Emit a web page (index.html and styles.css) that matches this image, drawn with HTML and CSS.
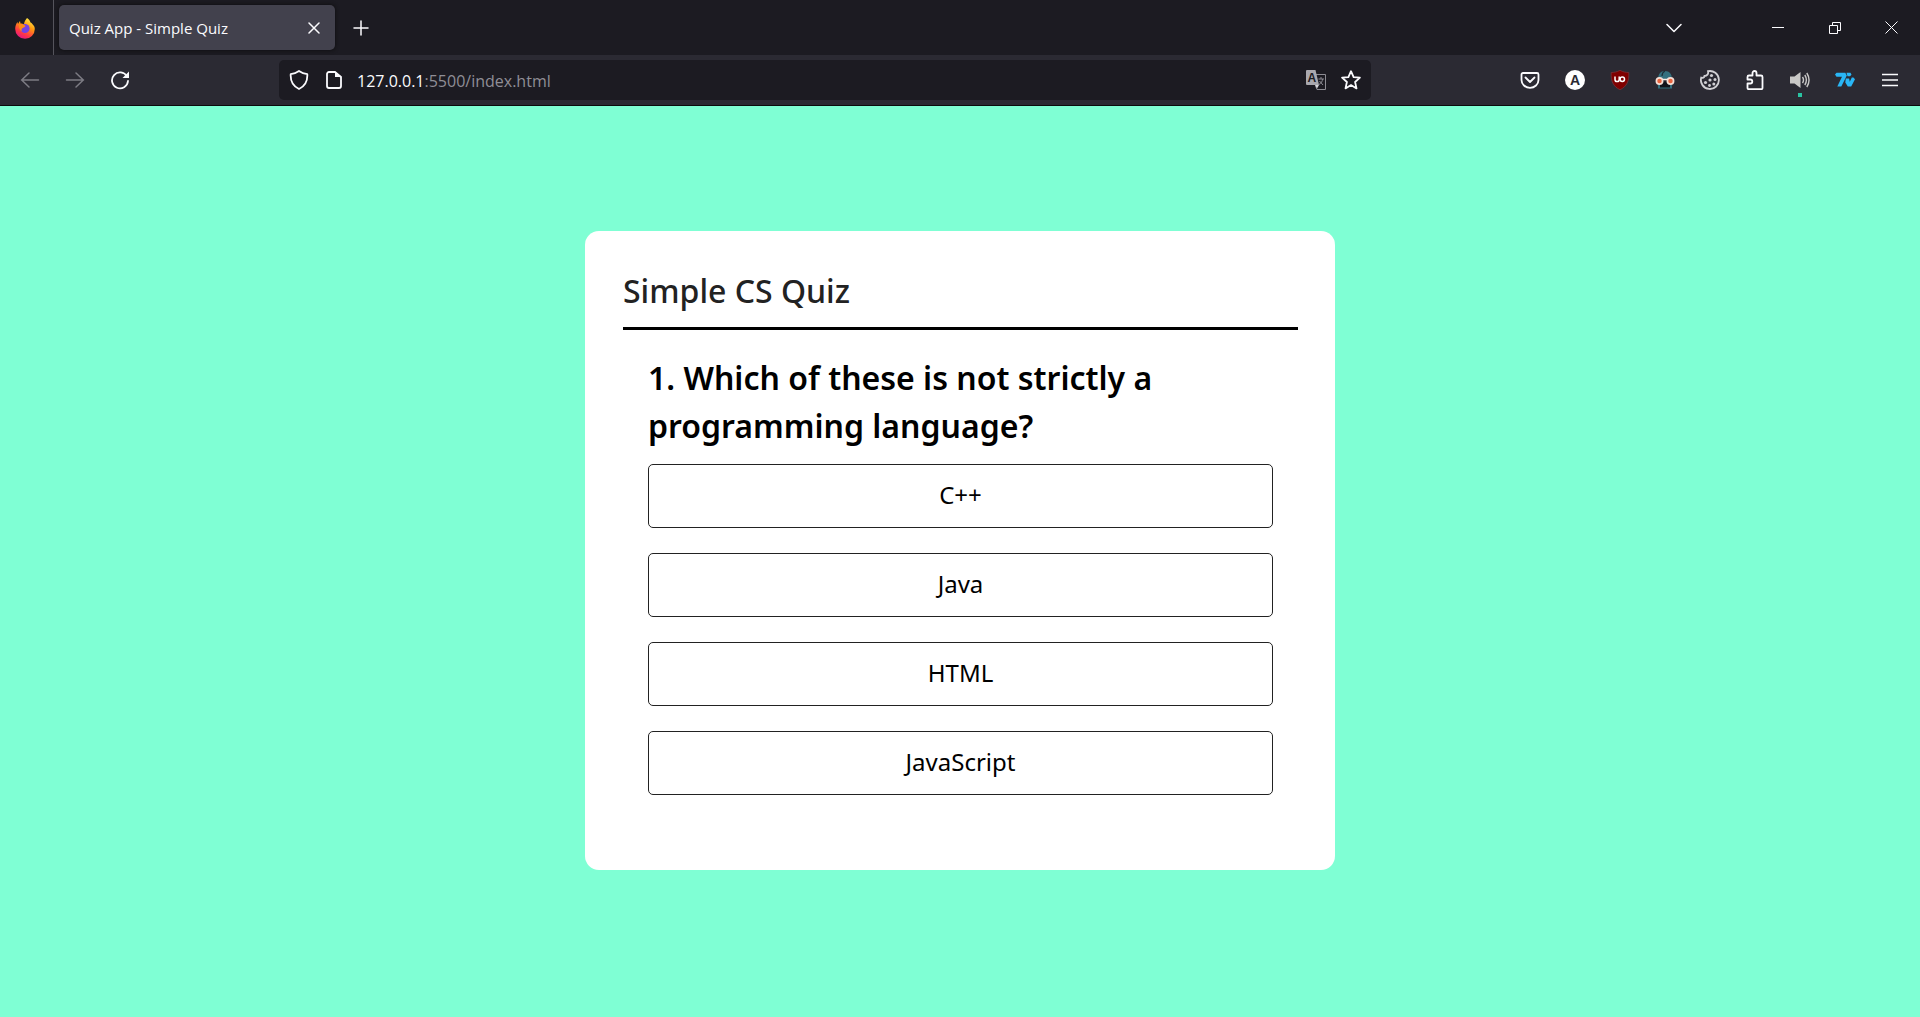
FILE: index.html
```html
<!DOCTYPE html>
<html lang="en">
<head>
<meta charset="utf-8">
<title>Quiz App - Simple Quiz</title>
<link rel="stylesheet" href="styles.css">
</head>
<body>
<header class="browser">
  <div class="tabs">
    <button class="home" aria-label="Firefox View">
      <svg width="22" height="22" viewBox="0 0 22 22">
        <defs>
          <linearGradient id="flame" x1="0.8" y1="0" x2="0.3" y2="1">
            <stop offset="0" stop-color="#fff44f"/><stop offset="0.4" stop-color="#ff980e"/><stop offset="0.75" stop-color="#ff3647"/><stop offset="1" stop-color="#e31587"/>
          </linearGradient>
        </defs>
        <path d="M13 1c2 1 3 3 3.500 4.500 1 .3 1.500 1 1.800 1.500C20 8.500 20.800 10 20.800 12a9.800 9.800 0 0 1-19.600 0c0-3 .8-5 2.300-7l.5 2c.8-1 1-2 2-3l.5 2.500c1.300 0 2.500.2 3.500 1C10 5 11.500 3 13 1z" fill="url(#flame)"/>
        <circle cx="11" cy="11.500" r="4.600" fill="#7542e5"/>
        <path d="M5 8c2-1 5-1 6.500 1-1 1.500-2.500 1.500-3.500 2.500-.5 1-.8 1.500 0 3-2-1-3.500-4-3-6.500z" fill="#ff8a16"/>
      </svg>
    </button>
    <div class="tab">
      <span class="tab-title">Quiz App - Simple Quiz</span>
      <button class="tab-close" aria-label="Close tab"><svg width="12" height="12" viewBox="0 0 12 12"><path class="line" d="M1 1l10 10M11 1L1 11"/></svg></button>
    </div>
    <button class="new-tab" aria-label="New tab"><svg width="16" height="16" viewBox="0 0 16 16"><path class="line" d="M8 1v14M1 8h14"/></svg></button>
    <button class="all-tabs" aria-label="List all tabs"><svg width="16" height="16" viewBox="0 0 16 16"><path class="line" d="M1 4.500l7 7 7-7"/></svg></button>
    <div class="window-buttons">
      <button aria-label="Minimize"><svg width="12" height="12" viewBox="0 0 12 12"><path class="thin" d="M0 5.500h12"/></svg></button>
      <button aria-label="Restore"><svg width="12" height="12" viewBox="0 0 12 12"><path class="thin" d="M.5 3.500h8v8h-8zM3.500 3.500v-3h8v8h-3"/></svg></button>
      <button aria-label="Close"><svg width="13" height="13" viewBox="0 0 13 13"><path class="thin" d="M.5.5l12 12M12.500.5l-12 12"/></svg></button>
    </div>
  </div>
  <div class="toolbar">
    <div class="history">
      <button class="faded" aria-label="Back"><svg width="20" height="20" viewBox="0 0 20 20"><path class="line" d="M18.500 10h-17M9 3l-7.300 7L9 17"/></svg></button>
      <button class="faded" aria-label="Forward"><svg width="20" height="20" viewBox="0 0 20 20"><path class="line" d="M1.500 10h17M11 3l7.300 7-7.300 7"/></svg></button>
      <button aria-label="Reload"><svg width="20" height="20" viewBox="0 0 20 20"><path class="line bold" d="M17 6.500A8 8 0 1 0 18 11"/><path d="M19 1.500v6.500h-6.500z" fill="currentColor"/></svg></button>
    </div>
    <div class="address">
      <svg width="20" height="20" viewBox="0 0 20 20"><path class="line bold" d="M10 1c2.500 1.800 5 2.700 8.300 3.200.4 7-2.300 12-8.300 14.800C4 16.200 1.300 11.200 1.700 4.200 5 3.700 7.500 2.800 10 1z"/></svg>
      <svg width="20" height="20" viewBox="0 0 20 20"><path class="line bold" d="M11 2H5a2 2 0 0 0-2 2v12a2 2 0 0 0 2 2h10a2 2 0 0 0 2-2V7z"/><path d="M11 1.500V7h6.500z" fill="currentColor"/></svg>
      <span class="url">127.0.0.1<span class="url-rest">:5500/index.html</span></span>
      <svg class="translate" width="20" height="20" viewBox="0 0 20 20">
        <path d="M10 4.500h9.500v15H11l-1.500-4" fill="none" stroke="#8d8c93"/>
        <path d="M1 0h8.500L13 15H1a1 1 0 0 1-1-1V1a1 1 0 0 1 1-1z" fill="#a9a8ae"/>
        <path d="M9 15h4l-2 3.500z" fill="#d6d5da"/>
        <path d="M12.500 9H18M16.500 9c0 2-1 4-3.500 5.500M13.500 11l3.500 4M15 7v2" fill="none" stroke="#8d8c93"/>
        <text x="1.500" y="12" font-family="Liberation Sans" font-size="12" font-weight="700" fill="#1c1b22">A</text>
      </svg>
      <svg width="20" height="20" viewBox="0 0 20 20"><path class="line bold" d="M10 1.200l2.600 5.900 6.300.6-4.800 4.300 1.400 6.400L10 15.100l-5.500 3.300L5.900 12 1.100 7.700l6.300-.6z"/></svg>
    </div>
    <div class="extensions">
      <button aria-label="Save to Pocket"><svg width="20" height="20" viewBox="0 0 20 20"><path class="line bold" d="M3 3h14a1.500 1.500 0 0 1 1.500 1.500V10a8.500 7.800 0 0 1-17 0V4.500A1.500 1.500 0 0 1 3 3z"/><path class="line bold" d="M5.500 7.500l4.500 4.500 4.500-4.500"/></svg></button>
      <button aria-label="Account"><svg width="20" height="20" viewBox="0 0 20 20"><circle cx="10" cy="10" r="10" fill="#fff"/><text x="10" y="15" text-anchor="middle" font-family="Liberation Sans" font-size="14" font-weight="700" fill="#2b2a33">A</text></svg></button>
      <button aria-label="uBlock Origin"><svg width="20" height="20" viewBox="0 0 20 20"><path d="M10 0.300c3 1.700 6 2.200 8.800 2.200C19.200 11 17 16.500 10 19.700 3 16.500.8 11 1.200 2.500 4 2.500 7 2 10 .3z" fill="#800000" stroke="#74333a" stroke-width="0.800"/><path d="M5 6.500v3a2.100 2.100 0 0 0 4.200 0v-3" fill="none" stroke="#fff" stroke-width="1.500"/><circle cx="12.300" cy="9.200" r="2.200" fill="none" stroke="#fff" stroke-width="1.500"/></svg></button>
      <button aria-label="Privacy goggles"><svg width="20" height="20" viewBox="0 0 20 20"><path d="M3 10C3 4 5.500 1 10 1s7 3 7 9z" fill="#34707f"/><path d="M7 6c0-2 1-4 3-5" fill="none" stroke="#1d2f38" stroke-width="1.200"/><path d="M3 12h14v6.500H3z" fill="#34707f"/><path d="M5 13.500l5-2 5 2v4H5z" fill="#12121a"/><circle cx="4.500" cy="11" r="3.100" fill="#e8643f" stroke="#f5dfd6" stroke-width="1.700"/><circle cx="15.500" cy="11" r="3.100" fill="#e8643f" stroke="#f5dfd6" stroke-width="1.700"/><path d="M7.500 9.500h5" stroke="#f5ebe6" stroke-width="1.500"/></svg></button>
      <button aria-label="Cookie settings"><svg width="20" height="20" viewBox="0 0 20 20"><path d="M8 1.200a9 9 0 1 1-6.800 6.500c1.500.5 3 0 3.300-1.700C7 6 8.800 4 8 1.200z" fill="none" stroke="#d0cfd3" stroke-width="1.800"/><g fill="#d0cfd3"><circle cx="11.500" cy="5.500" r="1.600"/><circle cx="15" cy="9.500" r="1.500"/><circle cx="10" cy="10" r="1.600"/><circle cx="5.500" cy="12.500" r="1.600"/><circle cx="13.800" cy="14" r="1.500"/><circle cx="9.500" cy="15.500" r="1.400"/></g></svg></button>
      <button aria-label="Extensions"><svg width="20" height="20" viewBox="0 0 20 20"><path class="line bold" d="M2.500 18v-4.500h2.800a2 2 0 0 0 0-4H2.500V7A1.500 1.500 0 0 1 4 5.500h3.500V3a2 2 0 0 1 4 0v2.500h4.500a1.500 1.500 0 0 1 1.500 1.500v11a1.200 1.200 0 0 1-1.200 1.200H3.700a1.200 1.200 0 0 1-1.200-1.200z"/></svg></button>
      <button class="volume" aria-label="Volume"><svg width="20" height="20" viewBox="0 0 20 20"><path d="M0 6.500h4.500l6-4.500v16l-6-4.500H0z" fill="#c9c8c7"/><path d="M12.500 7q2 3 0 6M14.800 5q3.200 5 0 10M16.800 3q4.500 7 0 14" fill="none" stroke="#c9c8c7" stroke-width="1.400"/></svg></button>
      <button aria-label="7TV"><svg width="20" height="20" viewBox="0 0 20 20" fill="#29b6f6"><path d="M1.500 2.800h8.800l1.500 2.700-5.500 11H2.300l4.700-9.700H1.500L0 4.500z"/><path d="M11.500 2.800h4l1 2-1.500 1.500h-2.500z"/><path d="M10.800 8.500h3.300l.7 3.300 2-4.300h1.600l1.600 1.800-3.800 7.200h-3.400l-2.500-4z"/></svg></button>
      <button aria-label="Menu"><svg width="16" height="16" viewBox="0 0 16 16"><path class="line" d="M0 2.500h16M0 8h16M0 13.500h16"/></svg></button>
    </div>
  </div>
</header>
<main class="page">
  <section class="card">
    <h1 class="title">Simple CS Quiz</h1>
    <div class="quiz">
      <h2 class="question">1. Which of these is not strictly a programming language?</h2>
      <div class="answers">
        <button class="answer">C++</button>
        <button class="answer">Java</button>
        <button class="answer">HTML</button>
        <button class="answer">JavaScript</button>
      </div>
    </div>
  </section>
</main>
</body>
</html>
```
FILE: styles.css
```css
* { box-sizing: border-box; }
body {
  margin: 0;
  min-height: 100vh;
  display: flex;
  flex-direction: column;
  background: #7fffd4;
  font-family: "Noto Sans", sans-serif;
}
button {
  padding: 0;
  border: 0;
  background: none;
  color: inherit;
  font: inherit;
}
svg { display: block; flex: none; }
.line { fill: none; stroke: currentColor; stroke-width: 1.5; stroke-linecap: round; stroke-linejoin: round; }
.bold { stroke-width: 1.8; }
.thin { fill: none; stroke: currentColor; stroke-width: 1; }

.browser {
  color: #fbfbfe;
  background: #2b2a33;
  border-bottom: 1px solid #0c0c0d;
  font-family: "Open Sans", sans-serif;
}
.browser button { display: grid; place-items: center; }
.tabs {
  display: flex;
  height: 55px;
  background: #1c1b22;
}
.browser .home {
  width: 54px;
  padding-right: 4px;
  border-right: 1px solid #55545c;
}
.tab {
  display: flex;
  align-items: center;
  justify-content: space-between;
  width: 276px;
  margin: 5px;
  padding: 0 10px;
  border-radius: 5px;
  background: #42414d;
  box-shadow: 0 0 4px #0c0c0d;
  font-size: 15px;
}
.tab-close { width: 22px; height: 22px; }
.new-tab { width: 42px; }
.all-tabs { width: 50px; margin-left: auto; }
.window-buttons {
  display: grid;
  grid-template-columns: repeat(3, 57px);
  margin-left: 50px;
}
.toolbar {
  display: flex;
  align-items: center;
  height: 50px;
  padding: 0 8px 0 7px;
}
.history, .extensions { display: flex; }
.history button, .extensions button { width: 45px; height: 40px; }
.faded { color: #7d7c84; }
.address {
  display: flex;
  align-items: center;
  gap: 15px;
  flex: 1;
  height: 40px;
  margin: 0 136px 0 137px;
  padding: 0 10px;
  border-radius: 5px;
  background: #1c1b22;
  font-size: 16px;
}
.url { flex: 1; margin-left: -2px; padding-top: 2px; }
.url-rest { color: #8f8e96; }
.volume { position: relative; }
.volume::after {
  content: "";
  position: absolute;
  bottom: 3px;
  width: 4px;
  height: 4px;
  background: #2ac3a2;
}

.page {
  flex: 1;
  padding: 125px 20px;
}
.card {
  max-width: 750px;
  margin: 0 auto;
  padding: 36px 37px 51px 38px;
  border-radius: 14px;
  background: #fff;
}
.title {
  margin: 0;
  padding-bottom: 12px;
  border-bottom: 3px solid #000;
  color: #222;
  font-size: 32px;
  font-weight: 500;
  line-height: 48px;
}
.quiz { padding: 24px 25px; }
.question {
  margin: 0 0 14px;
  font-size: 32px;
  font-weight: 600;
  line-height: 48px;
}
.answers { display: grid; gap: 25px; }
.answer {
  height: 64px;
  padding-bottom: 4px;
  border: 1px solid #222;
  border-radius: 5px;
  color: #000;
  font-size: 24px;
}
```
